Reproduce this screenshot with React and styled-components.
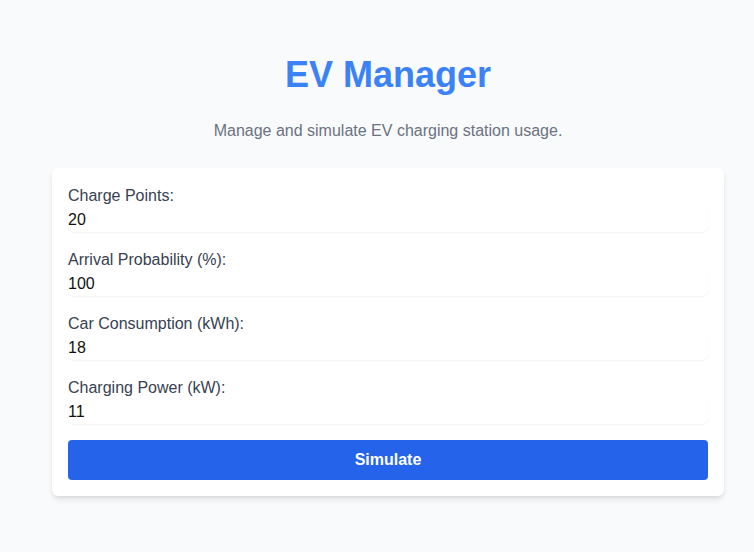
import React, { useState } from 'react'
import styled, { createGlobalStyle } from 'styled-components'

const GlobalStyle = createGlobalStyle`
  html, body {
    margin: 0;
    padding: 0;
    background: #f9fafb;
    font-family: "Liberation Sans", Arial, sans-serif;
  }
  * { box-sizing: border-box; }
`

const Page = styled.div`
  min-height: 552px;
  background: #f9fafb;
  padding: 55px 30px 40px 52px;
`

const Container = styled.div`
  max-width: 672px;
`

const Title = styled.h1`
  margin: 0 0 24px;
  font-size: 36px;
  line-height: 40px;
  font-weight: 700;
  color: #3b82f6;
  text-align: center;
`

const Subtitle = styled.p`
  margin: 0 0 25px;
  font-size: 16px;
  line-height: 24px;
  color: #6b7280;
  text-align: center;
`

const Card = styled.form`
  background: #fff;
  border-radius: 6px;
  box-shadow: 0 4px 6px -1px rgba(0, 0, 0, 0.1), 0 2px 4px -2px rgba(0, 0, 0, 0.1);
  padding: 16px;
  display: flex;
  flex-direction: column;
  gap: 16px;
`

const Field = styled.div`
  display: flex;
  flex-direction: column;
`

const Label = styled.label`
  font-size: 16px;
  line-height: 24px;
  color: #374151;
`

const Input = styled.input`
  width: 100%;
  height: 24px;
  border: none;
  padding: 0;
  border-radius: 6px;
  font-family: inherit;
  font-size: 16px;
  color: #111;
  background: #fff;
  box-shadow: 0 1px 2px 0 rgba(0, 0, 0, 0.05);
  outline: none;
`

const Button = styled.button`
  height: 40px;
  border: none;
  border-radius: 4px;
  background: #2563eb;
  color: #fff;
  font-family: inherit;
  font-size: 16px;
  font-weight: 700;
  cursor: pointer;
`

const fields = [
  { id: 'points', label: 'Charge Points:', value: 20 },
  { id: 'prob', label: 'Arrival Probability (%):', value: 100 },
  { id: 'consumption', label: 'Car Consumption (kWh):', value: 18 },
  { id: 'power', label: 'Charging Power (kW):', value: 11 },
]

const App = () => {
  const [values, setValues] = useState(
    Object.fromEntries(fields.map((f) => [f.id, f.value]))
  )

  return (
    <>
      <GlobalStyle />
      <Page>
        <Container>
          <Title>EV Manager</Title>
          <Subtitle>Manage and simulate EV charging station usage.</Subtitle>
          <Card onSubmit={(e) => e.preventDefault()}>
            {fields.map((f) => (
              <Field key={f.id}>
                <Label htmlFor={f.id}>{f.label}</Label>
                <Input
                  id={f.id}
                  type="text"
                  value={values[f.id]}
                  onChange={(e) => setValues({ ...values, [f.id]: e.target.value })}
                />
              </Field>
            ))}
            <Button type="submit">Simulate</Button>
          </Card>
        </Container>
      </Page>
    </>
  )
}

export default App
